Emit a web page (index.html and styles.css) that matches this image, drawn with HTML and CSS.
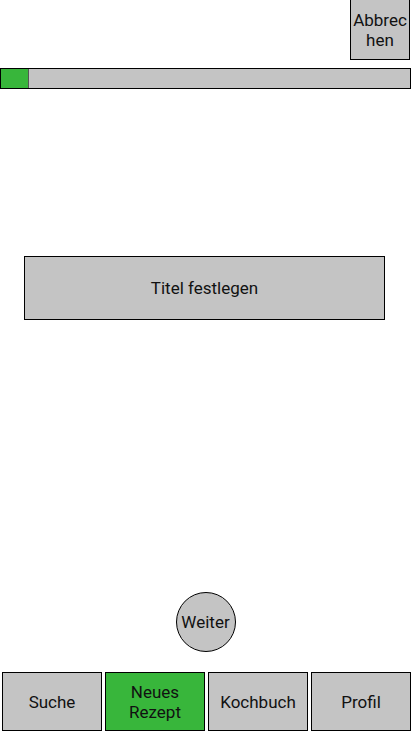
FILE: index.html
```html
<!DOCTYPE html>
<html lang="de">
<head>
<meta charset="utf-8">
<link rel="stylesheet" href="styles.css">
</head>
<body>
<div class="screen">
  <div class="topbar">
    <button class="cancel">Abbrechen</button>
  </div>
  <div class="progress"><div class="progress-fill" style="width:27px"></div></div>
  <div class="main">
    <div class="title-box">Titel festlegen</div>
  </div>
  <div class="next-row">
    <button class="next">Weiter</button>
  </div>
  <nav class="tabs">
    <div class="tab">Suche</div>
    <div class="tab active">Neues<br>Rezept</div>
    <div class="tab">Kochbuch</div>
    <div class="tab">Profil</div>
  </nav>
</div>
</body>
</html>
```
FILE: styles.css
```css
html, body {
  margin: 0;
  padding: 0;
  background: #fff;
}
.screen {
  width: 411px;
  height: 731px;
  display: flex;
  flex-direction: column;
  font-family: Roboto, "Liberation Sans", sans-serif;
  font-size: 17px;
  color: #111;
  overflow: hidden;
}
.topbar {
  display: flex;
  justify-content: flex-end;
  height: 60px;
  padding-right: 1px;
}
.cancel {
  width: 60px;
  height: 60px;
  margin: 0;
  padding: 0 1px;
  border: 1px solid #000;
  border-top: none;
  background: #c4c4c4;
  font: inherit;
  color: inherit;
  word-break: break-all;
  line-height: 20px;
}
.progress {
  margin-top: 8px;
  height: 19px;
  border: 1px solid #000;
  background: #c4c4c4;
  display: flex;
}
.progress-fill {
  background: #38b63b;
  border-right: 1px solid #555;
}
.main {
  display: flex;
  justify-content: flex-start;
  padding-left: 24px;
  padding-top: 167px;
  height: 336px;
  box-sizing: border-box;
}
.title-box {
  width: 359px;
  height: 62px;
  border: 1px solid #000;
  background: #c4c4c4;
  display: flex;
  align-items: center;
  justify-content: center;
}
.next-row {
  display: flex;
  justify-content: center;
  margin-top: 167px;
}
.next {
  width: 60px;
  height: 60px;
  border-radius: 50%;
  border: 1px solid #000;
  background: #c4c4c4;
  font: inherit;
  color: inherit;
  padding: 0;
}
.tabs {
  margin-top: 20px;
  display: flex;
  gap: 3px;
  padding-left: 2px;
}
.tab {
  width: 98px;
  height: 57px;
  border: 1px solid #000;
  background: #c4c4c4;
  display: flex;
  align-items: center;
  justify-content: center;
  text-align: center;
  line-height: 20px;
}
.tab.active {
  background: #38b63b;
}
```
